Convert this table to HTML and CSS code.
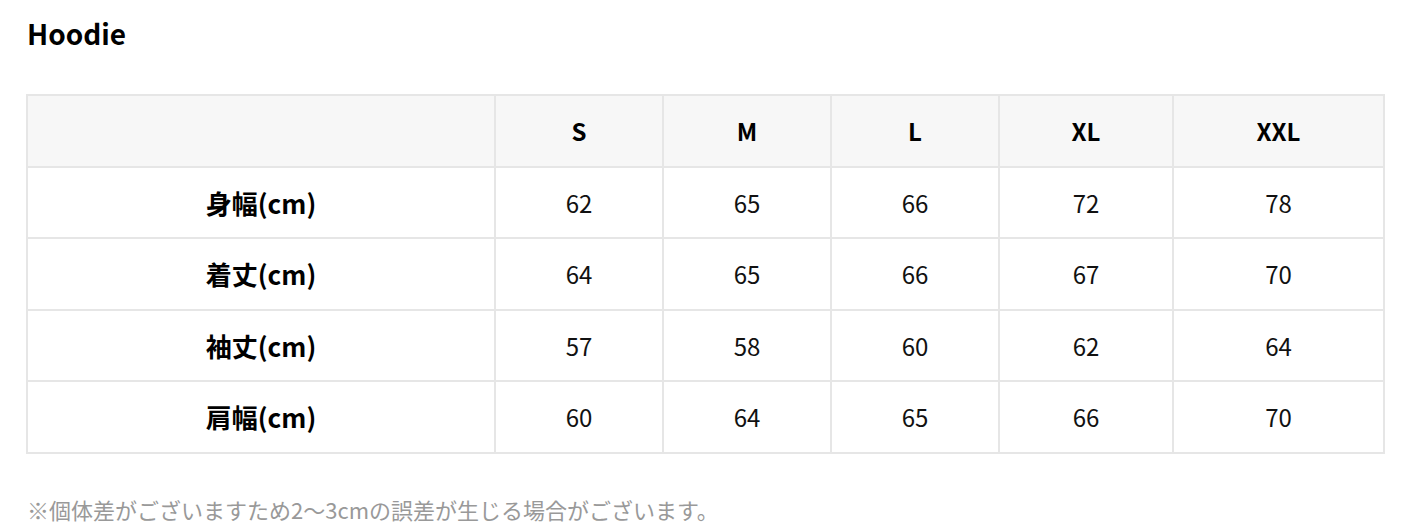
FILE: index.html
```html
<!DOCTYPE html>
<html lang="ja">
<head>
<meta charset="utf-8">
<link rel="stylesheet" href="styles.css">
</head>
<body>
<div class="page">
  <h2 class="title">Hoodie</h2>
  <table class="size-table">
    <colgroup>
      <col class="c-label">
      <col class="c-s">
      <col class="c-m">
      <col class="c-l">
      <col class="c-xl">
      <col class="c-xxl">
    </colgroup>
    <thead>
      <tr><th></th><th>S</th><th>M</th><th>L</th><th>XL</th><th>XXL</th></tr>
    </thead>
    <tbody>
      <tr><th>身幅(cm)</th><td>62</td><td>65</td><td>66</td><td>72</td><td>78</td></tr>
      <tr><th>着丈(cm)</th><td>64</td><td>65</td><td>66</td><td>67</td><td>70</td></tr>
      <tr><th>袖丈(cm)</th><td>57</td><td>58</td><td>60</td><td>62</td><td>64</td></tr>
      <tr><th>肩幅(cm)</th><td>60</td><td>64</td><td>65</td><td>66</td><td>70</td></tr>
    </tbody>
  </table>
  <p class="note">※個体差がございますため2〜3cmの誤差が生じる場合がございます。</p>
</div>
</body>
</html>
```

FILE: styles.css
```css
* { box-sizing: border-box; }
html, body { margin: 0; padding: 0; background: #fff; }
body {
  font-family: "Noto Sans CJK JP", "Noto Sans", sans-serif;
  color: #111;
}
.page {
  padding: 14px 23px 0 26px;
}
.title {
  margin: 0 0 42px 1px;
  font-size: 28px;
  font-weight: 700;
  line-height: 38px;
  color: #000;
}
.size-table {
  width: 100%;
  border-collapse: collapse;
  table-layout: fixed;
  border: 2px solid #e6e6e6;
}
.c-label { width: 468px; }
.c-s, .c-m, .c-l { width: 168px; }
.c-xl { width: 174px; }
.size-table th, .size-table td {
  border: 2px solid #e6e6e6;
  height: 71.5px;
  text-align: center;
  vertical-align: middle;
  font-size: 24px;
  padding: 0;
}
.size-table th { font-weight: 700; color: #000; }
.size-table tbody th { font-size: 26px; }
.size-table td { font-weight: 400; }
.size-table thead th { background: #f7f7f7; }
.note {
  margin: 40px 0 0 1px;
  font-size: 22px;
  color: #999;
  line-height: 30px;
}
```
